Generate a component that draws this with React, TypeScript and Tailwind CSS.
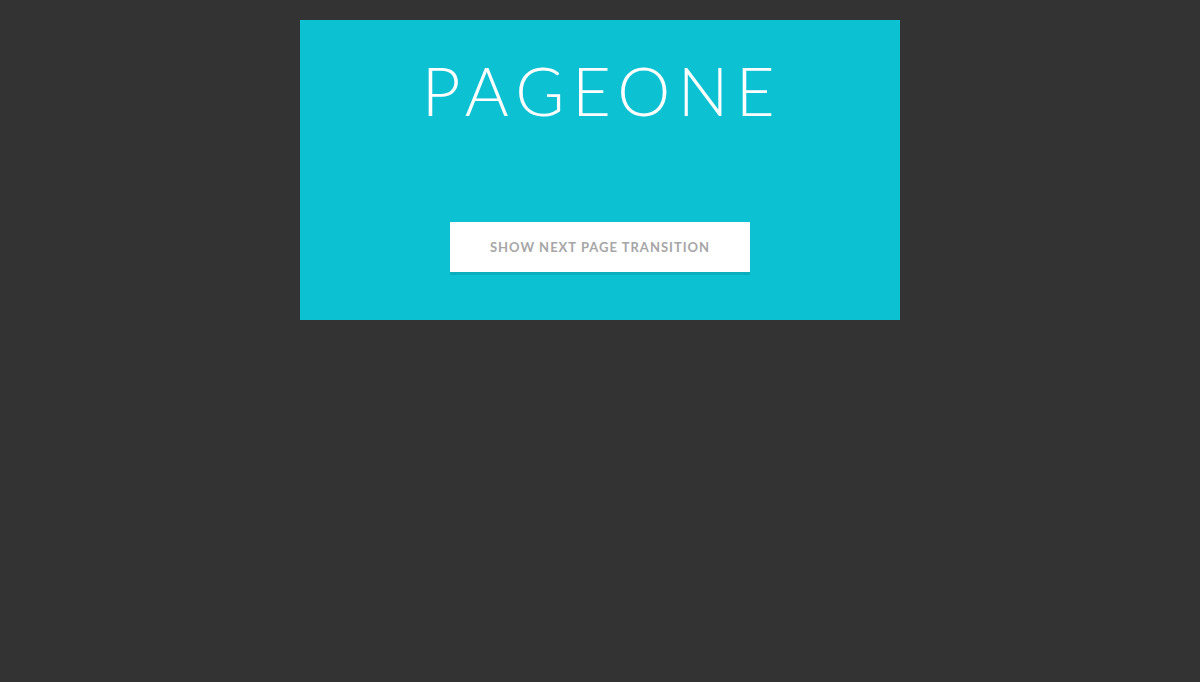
export default function App() {
  return (
    <div className="min-h-screen bg-[#333333] pt-5 font-['Lato',sans-serif]">
      <div className="mx-auto flex h-[300px] w-[600px] flex-col items-center bg-[#0cc2d2]">
        <h1 className="mt-[37px] pl-[4px] text-[67px] font-light leading-[67px] tracking-[7.5px] text-white">
          PAGEONE
        </h1>
        <button className="mt-[98px] h-[50px] w-[300px] bg-white pt-[2px] text-[13px] font-bold uppercase tracking-[1px] text-[#a6a6a6] shadow-[0_3px_0_#0aafbd]">
          Show next page transition
        </button>
      </div>
    </div>
  );
}
